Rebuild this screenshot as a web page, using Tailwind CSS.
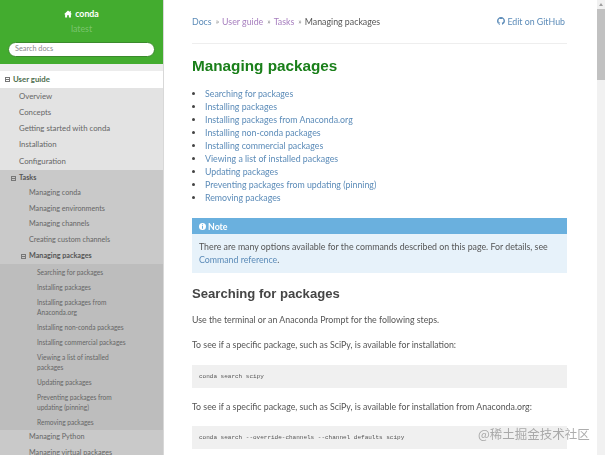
<!DOCTYPE html>
<html lang="en">
<head>
<meta charset="utf-8">
<title>Managing packages</title>
<script src="https://cdn.jsdelivr.net/npm/@tailwindcss/browser@4"></script>
</head>
<body class="bg-white">
<div class="relative flex h-[455px] w-[605px] overflow-hidden blur-[0.35px] font-['Lato','Liberation_Sans',sans-serif] text-[8.8px] text-[#404040]">
  <!-- sidebar -->
  <aside class="flex h-full w-[164px] shrink-0 flex-col overflow-hidden border-r border-[#d8d8d8] bg-white">
    <div class="flex h-[64px] shrink-0 flex-col items-center bg-[#43ac2f] px-[8px] pt-[7px]">
      <div class="flex h-[14px] items-center gap-[3px] text-[8.8px] font-bold text-white">
        <svg class="h-[8px] w-[8px]" viewBox="0 0 16 16" fill="currentColor"><path d="M8 1 0 8.5h2.2V15h4v-4.5h3.6V15h4V8.5H16l-2.5-2.4V2h-2v2.2z"/></svg>
        <span>conda</span>
      </div>
      <div class="mt-[1px] h-[14px] text-[8.8px] leading-[14px] text-white/30">latest</div>
      <div class="mt-[6px] flex h-[15px] w-full items-center rounded-full border border-[#3a8a2c] bg-white px-[6px] text-[7.3px] text-[#8a8a8a]">Search docs</div>
    </div>
    <div class="h-[7px] shrink-0 bg-[#ececec]"></div>
    <div class="flex h-[17px] shrink-0 items-center gap-[3px] bg-white pl-[5px] text-[7.8px] font-bold text-[#4d6d4d]">
      <span class="flex h-[5px] w-[5px] items-center border border-[#777]"><span class="h-px w-full bg-[#777]"></span></span><span>User guide</span>
    </div>
    <div class="flex flex-col bg-[#e3e3e3] text-[7.8px] text-[#666]">
      <div class="flex h-[17px] items-center pl-[19px]">Overview</div>
      <div class="flex h-[16px] items-center pl-[19px]">Concepts</div>
      <div class="flex h-[16px] items-center pl-[19px]">Getting started with conda</div>
      <div class="flex h-[16px] items-center pl-[19px]">Installation</div>
      <div class="flex h-[17px] items-center pl-[19px]">Configuration</div>
    </div>
    <div class="flex flex-col bg-[#c9c9c9] text-[7.2px] text-[#666]">
      <div class="flex h-[16px] items-center gap-[3px] pl-[11px] font-bold text-[#555]">
        <span class="flex h-[5px] w-[5px] items-center border border-[#777]"><span class="h-px w-full bg-[#777]"></span></span><span>Tasks</span>
      </div>
      <div class="flex h-[15px] items-center pl-[29px]">Managing conda</div>
      <div class="flex h-[16px] items-center pl-[29px]">Managing environments</div>
      <div class="flex h-[15px] items-center pl-[29px]">Managing channels</div>
      <div class="flex h-[16px] items-center pl-[29px]">Creating custom channels</div>
      <div class="flex h-[16px] items-center gap-[3px] pl-[21px] font-bold text-[#555]">
        <span class="flex h-[5px] w-[5px] items-center border border-[#777]"><span class="h-px w-full bg-[#777]"></span></span><span>Managing packages</span>
      </div>
    </div>
    <div class="flex flex-col gap-[5px] bg-[#bdbdbd] pb-[3.5px] pl-[37px] pr-[27px] pt-[2.5px] text-[6.6px] leading-[10px] text-[#666]">
      <div>Searching for packages</div>
      <div>Installing packages</div>
      <div>Installing packages from Anaconda.org</div>
      <div>Installing non-conda packages</div>
      <div>Installing commercial packages</div>
      <div>Viewing a list of installed packages</div>
      <div>Updating packages</div>
      <div>Preventing packages from updating (pinning)</div>
      <div>Removing packages</div>
    </div>
    <div class="flex flex-1 flex-col bg-[#c9c9c9] text-[7.2px] text-[#666]">
      <div class="flex h-[15px] items-center pl-[29px]">Managing Python</div>
      <div class="flex h-[16px] items-center pl-[29px]">Managing virtual packages</div>
    </div>
  </aside>

  <!-- content -->
  <main class="min-w-0 flex-1 pl-[28px] pr-[30px] pt-[14px] text-[8.8px] leading-[13px]">
    <div class="flex h-[14px] items-center justify-between">
      <div class="flex items-center gap-[3px]">
        <a class="text-[#5b8bb8]">Docs</a><span class="ml-[1px] text-[8px] text-[#888]">»</span><a class="text-[#a77fbf]">User guide</a><span class="ml-[1px] text-[8px] text-[#888]">»</span><a class="text-[#a77fbf]">Tasks</a><span class="ml-[1px] text-[8px] text-[#888]">»</span><span class="text-[#555]">Managing packages</span>
      </div>
      <a class="flex items-center gap-[2px] pr-[2px] text-[#5b8bb8]">
        <svg class="h-[8px] w-[8px]" viewBox="0 0 16 16" fill="currentColor"><path d="M8 0C3.58 0 0 3.58 0 8c0 3.54 2.29 6.53 5.47 7.59.4.07.55-.17.55-.38 0-.19-.01-.82-.01-1.49-2.01.37-2.53-.49-2.69-.94-.09-.23-.48-.94-.82-1.13-.28-.15-.68-.52-.01-.53.63-.01 1.08.58 1.23.82.72 1.21 1.87.87 2.33.66.07-.52.28-.87.51-1.07-1.78-.2-3.64-.89-3.64-3.95 0-.87.31-1.59.82-2.15-.08-.2-.36-1.02.08-2.12 0 0 .67-.21 2.2.82a7.5 7.5 0 0 1 4 0c1.53-1.04 2.2-.82 2.2-.82.44 1.1.16 1.92.08 2.12.51.56.82 1.27.82 2.15 0 3.07-1.87 3.75-3.65 3.95.29.25.54.73.54 1.48 0 1.07-.01 1.93-.01 2.2 0 .21.15.46.55.38A8 8 0 0 0 16 8c0-4.42-3.58-8-8-8z"/></svg>
        <span>Edit on GitHub</span>
      </a>
    </div>
    <div class="mt-[15px] h-px bg-[#eeeeee]"></div>
    <h1 class="mt-[12px] font-['Liberation_Sans',sans-serif] text-[15.3px] font-bold leading-[20px] text-[#1a7f1a]">Managing packages</h1>
    <ul class="mt-[11px] list-disc pl-[13px] text-[#5b8bb8] marker:text-[#444]">
      <li>Searching for packages</li>
      <li>Installing packages</li>
      <li>Installing packages from Anaconda.org</li>
      <li>Installing non-conda packages</li>
      <li>Installing commercial packages</li>
      <li>Viewing a list of installed packages</li>
      <li>Updating packages</li>
      <li>Preventing packages from updating (pinning)</li>
      <li>Removing packages</li>
    </ul>
    <div class="mt-[14px] bg-[#e7f2fa]">
      <div class="flex h-[16px] items-center gap-[2px] bg-[#6ab0de] pl-[7px] font-bold text-white">
        <svg class="h-[7px] w-[7px]" viewBox="0 0 16 16"><circle cx="8" cy="8" r="8" fill="#fff"/><path d="M6.8 3h2.4v2.2H6.8zM6.8 6.6h2.4V13H6.8z" fill="#6ab0de"/></svg>
        <span>Note</span>
      </div>
      <div class="px-[7px] pb-[7px] pt-[6px] text-[#555]">There are many options available for the commands described on this page. For details, see <a class="text-[#5b8bb8]">Command reference</a>.</div>
    </div>
    <h2 class="mt-[11px] font-['Liberation_Sans',sans-serif] text-[13.1px] font-bold leading-[20px] text-[#454545]">Searching for packages</h2>
    <p class="mt-[9px] text-[#555]">Use the terminal or an Anaconda Prompt for the following steps.</p>
    <p class="mt-[12px] text-[#555]">To see if a specific package, such as SciPy, is available for installation:</p>
    <div class="mt-[14px] flex h-[23px] items-center bg-[#f0f0f0] pl-[7px] font-['Liberation_Mono',monospace] text-[6px] text-[#555]">conda search scipy</div>
    <p class="mt-[12px] text-[#555]">To see if a specific package, such as SciPy, is available for installation from Anaconda.org:</p>
    <div class="mt-[13px] flex h-[23px] items-center bg-[#f0f0f0] pl-[7px] font-['Liberation_Mono',monospace] text-[6px] text-[#555]">conda search --override-channels --channel defaults scipy</div>
  </main>

  <!-- scrollbar -->
  <div class="flex h-full w-[8px] shrink-0 flex-col items-center bg-[#f1f1f1]">
    <div class="mt-[3px] h-0 w-0 border-x-[2px] border-b-[3px] border-x-transparent border-b-[#a0a0a0]"></div>
    <div class="mt-[3px] h-[71px] w-full bg-[#c1c1c1]"></div>
  </div>

  <div class="absolute left-[478px] top-[424px] font-['Noto_Sans_CJK_SC',sans-serif] text-[12.5px] leading-[20px] text-[#8a8a8a]/70">@稀土掘金技术社区</div>
</div>
</body>
</html>
